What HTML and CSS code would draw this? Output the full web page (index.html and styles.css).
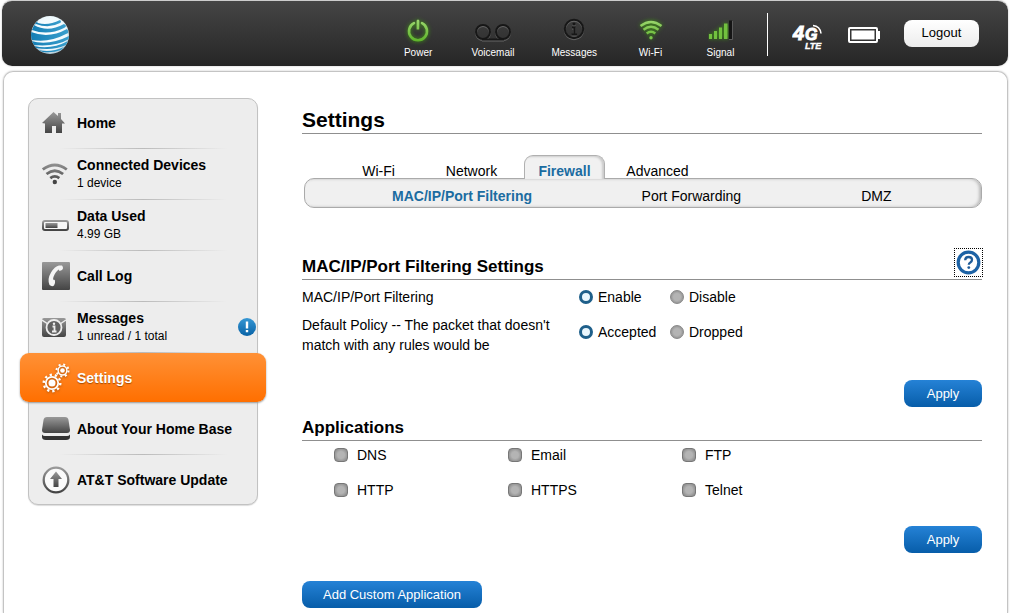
FILE: index.html
```html
<!DOCTYPE html>
<html lang="en">
<head>
<meta charset="utf-8">
<meta name="viewport" content="width=device-width, initial-scale=1">
<title>Settings</title>
<link rel="stylesheet" href="styles.css">
</head>
<body>
<svg class="defs" aria-hidden="true">
  <defs>
    <linearGradient id="steel" x1="0" y1="0" x2="0" y2="1"><stop offset="0" stop-color="#999"/><stop offset="1" stop-color="#444"/></linearGradient>
    <linearGradient id="steelWifi" gradientUnits="userSpaceOnUse" x1="0" y1="0" x2="0" y2="22"><stop offset="0" stop-color="#999"/><stop offset="1" stop-color="#3c3c3c"/></linearGradient>
    <linearGradient id="lime" gradientUnits="userSpaceOnUse" x1="0" y1="0" x2="0" y2="26"><stop offset="0" stop-color="#a4dc78"/><stop offset="1" stop-color="#59b025"/></linearGradient>
    <linearGradient id="band" x1="0" y1="0" x2="1" y2="0"><stop offset="0" stop-color="#147db4"/><stop offset="1" stop-color="#3a9fcd"/></linearGradient>
    <radialGradient id="orb" cx=".5" cy=".45" r=".55"><stop offset="0" stop-color="#fff"/><stop offset=".8" stop-color="#eef9fd"/><stop offset="1" stop-color="#a9c3d0"/></radialGradient>
    <linearGradient id="alert" x1="0" y1="0" x2="0" y2="1"><stop offset="0" stop-color="#3697d4"/><stop offset="1" stop-color="#0862a6"/></linearGradient>
    <clipPath id="orbClip"><circle cx="19" cy="19" r="19"/></clipPath>
  </defs>
</svg>

<header class="topbar">
  <a class="logo" href="#" aria-label="AT&amp;T">
    <svg width="38" height="38" viewBox="0 0 38 38">
      <circle cx="19" cy="19" r="19" fill="url(#orb)"/>
      <g clip-path="url(#orbClip)" fill="url(#band)">
        <path d="M8 3Q5 6 7 7Q17 10 29 4Q31 6 29 7Q18 13 5 8L3 9Z"/>
        <path d="M3 9Q17 17 33 8Q37 10 33 12Q17 20 1 14Z"/>
        <path d="M0 16Q18 23 36 13Q39 17 35 18Q18 27 1 24L-1 21Z"/>
        <path d="M0 25Q18 30 38 20L38 23Q25 31 3 29Z"/>
        <path d="M3 30Q20 34 37 25L35 29Q22 35 5 32Z"/>
        <path d="M7 34Q20 37 33 31L30 34Q22 37 12 36Z"/>
      </g>
    </svg>
  </a>
  <ul class="status">
    <li>
      <svg class="glow" width="26" height="26" viewBox="0 0 26 26" fill="none" stroke="url(#lime)" stroke-width="2.6" stroke-linecap="round"><path d="M9 6.2a9 9 0 1 0 8 0"/><path d="M12.9 4v8.5L13.1 4"/></svg>
      <span>Power</span>
    </li>
    <li>
      <svg class="etched" width="38" height="26" viewBox="0 0 38 26" fill="none" stroke="#171717" stroke-width="2"><circle cx="9" cy="15" r="7"/><circle cx="29" cy="15" r="7"/><path d="M8 22.500h22"/></svg>
      <span>Voicemail</span>
    </li>
    <li>
      <svg class="etched" width="26" height="26" viewBox="0 0 26 26" fill="none" stroke="#171717"><circle cx="13" cy="12" r="9.2" stroke-width="2"/><path d="M11 10.500h2.500v7M10.500 17.500h5.500" stroke-width="2"/><circle cx="13" cy="7" r="1.600" fill="#171717" stroke="none"/></svg>
      <span>Messages</span>
    </li>
    <li>
      <svg class="glow" width="26" height="26" viewBox="0 0 26 26" fill="none" stroke="url(#lime)" stroke-width="2.400"><path d="M2.500 9q10.500-8 21 0M5.500 12.700q7.500-6 15 0M8.700 16.500q4.300-3.600 8.600 0"/><circle cx="13" cy="20.800" r="1.700" fill="#7cc84b" stroke="none"/></svg>
      <span>Wi-Fi</span>
    </li>
    <li>
      <svg width="26" height="26" viewBox="0 0 26 26"><g class="glow" fill="#72c13f"><path d="M1 17h3v5H1zM6 14h3v8H6zM11 10.500h3V22h-3zM16 6.500h3.500V22H16z"/></g><path d="M21 3.500h3V22h-3z" fill="#151515"/><path d="M24.500 4v18.500H21" fill="none" stroke="#5b5b5b"/></svg>
      <span>Signal</span>
    </li>
  </ul>
  <div class="tools">
    <svg class="lte" width="34" height="28" viewBox="0 0 34 28" role="img" aria-label="4G LTE"><text fill="#fff" stroke="#fff" stroke-width="1"><tspan class="lte-four" x="1" y="17">4</tspan><tspan class="lte-g" x="13" y="17">G</tspan><tspan class="lte-sub" x="13" y="26" stroke-width=".4">LTE</tspan></text><path d="M21 2.500q7 .5 8 8" fill="none" stroke="#fff" stroke-width="1.600"/></svg>
    <svg width="32" height="16" viewBox="0 0 32 16" role="img" aria-label="Battery"><rect x="1" y="1" width="28" height="14" rx="1" fill="none" stroke="#fff" stroke-width="2"/><path d="M3.500 3.500h23v9h-23zM30 4h2v8h-2z" fill="#fff"/></svg>
    <button class="logout" type="button">Logout</button>
  </div>
</header>

<div class="panel">
  <nav class="sidebar" aria-label="Main">
    <ul>
      <li><a href="#">
        <svg width="28" height="24" viewBox="0 0 28 24"><path d="M0 12L11.500 1l4.500 4V2h3v6l4 4.500h-3V22h-6v-7h-4v7H3v-9.500z" fill="url(#steel)"/></svg>
        <span class="label">Home</span></a></li>
      <li><a href="#">
        <svg width="28" height="24" viewBox="0 0 28 24" fill="none" stroke="url(#steelWifi)" stroke-width="2.800"><path d="M.8 7.500q12-9 24 0M4.500 12q8.300-6.500 16.600 0M8.300 16.200q4.500-3.600 9 0"/><circle cx="12.800" cy="20" r="2.200" fill="#444" stroke="none"/></svg>
        <span class="label">Connected Devices<small>1 device</small></span></a></li>
      <li><a href="#">
        <svg width="28" height="24" viewBox="0 0 28 24"><rect x="1" y="8" width="25" height="9" rx="2" fill="#f6f6f6" stroke="url(#steel)" stroke-width="2"/><rect x="3.500" y="10" width="12" height="5" fill="url(#steel)"/></svg>
        <span class="label">Data Used<small>4.99 GB</small></span></a></li>
      <li><a href="#">
        <svg width="28" height="28" viewBox="0 0 28 28"><rect width="28" height="28" rx="1" fill="url(#steel)"/><path d="M20 3.500q2 2.500 0 4.500l-2.500 1q-.5-1.500-1-1.500Q11.500 12 11 17.500q1.500 0 2 1 .5 3-1 5-2 1.500-4.500-.5Q5 17 9 10.500T17 3.500z" fill="#f4f4f4"/></svg>
        <span class="label">Call Log</span></a></li>
      <li><a href="#">
        <svg width="28" height="24" viewBox="0 0 28 24"><rect y="3" width="24" height="19" rx="2" fill="url(#steel)"/><path d="M0 5l6 4M24 5l-6 4" stroke="#eee" stroke-width="1.500"/><circle cx="12" cy="12.500" r="7.500" fill="#626262" stroke="#eee" stroke-width="1.800"/><path d="M10.500 11.500h2v5M10 16.500h4.500" fill="none" stroke="#eee" stroke-width="1.800"/><circle cx="12" cy="8.700" r="1.200" fill="#eee"/></svg>
        <span class="label">Messages<small>1 unread / 1 total</small></span>
        <svg class="alert" width="18" height="18" viewBox="0 0 18 18" role="img" aria-label="Unread"><circle cx="9" cy="9" r="9" fill="url(#alert)"/><path d="M7.800 3.500h2.400v7H7.800zM7.800 12h2.400v2.300H7.800z" fill="#fff"/></svg></a></li>
      <li class="current"><a href="#" aria-current="page">
        <svg width="28" height="30" viewBox="0 0 28 30" fill="none" stroke="#fff"><circle cx="10" cy="20" r="6.200" stroke-width="1.800"/><circle cx="10" cy="20" r="8.300" stroke-width="2.400" stroke-dasharray="2.300 2.910"/><circle cx="10" cy="20" r="3.500" fill="#fff" stroke="none"/><circle cx="20.500" cy="7.500" r="4.400" stroke-width="1.500"/><circle cx="20.500" cy="7.500" r="6" stroke-width="2" stroke-dasharray="2 2.710"/><circle cx="20.500" cy="7.500" r="2.300" fill="#fff" stroke="none"/></svg>
        <span class="label">Settings</span></a></li>
      <li><a href="#">
        <svg width="28" height="24" viewBox="0 0 28 24"><path d="M5 0h18q3 0 3.500 3L28 13q0 3-3 3H3q-3 0-3-3L1.500 3Q2 0 5 0z" fill="url(#steel)"/><path d="M0 17.500q1 1.500 3 1.500h22q2 0 3-1.500V20q0 3-4 3H4q-4 0-4-3z" fill="#333"/></svg>
        <span class="label">About Your Home Base</span></a></li>
      <li><a href="#">
        <svg width="28" height="28" viewBox="0 0 28 28"><circle cx="14" cy="14" r="12.300" fill="#fafafa" stroke="url(#steel)" stroke-width="2.300"/><path d="M14 5.500l6 7.500h-3.500v8h-5v-8H8z" fill="url(#steel)"/></svg>
        <span class="label">AT&amp;T Software Update</span></a></li>
    </ul>
  </nav>

  <main class="content">
    <h1>Settings</h1>
    <nav class="tabs" aria-label="Settings">
      <ul>
        <li><a href="#">Wi-Fi</a></li>
        <li><a href="#">Network</a></li>
        <li><a class="selected" href="#" aria-current="true">Firewall</a></li>
        <li><a href="#">Advanced</a></li>
      </ul>
    </nav>
    <nav class="subtabs" aria-label="Firewall">
      <a class="selected" href="#" aria-current="page">MAC/IP/Port Filtering</a>
      <a href="#">Port Forwarding</a>
      <a href="#">DMZ</a>
    </nav>

    <form class="filtering">
      <div class="section-head">
        <h2>MAC/IP/Port Filtering Settings</h2>
        <button class="help" type="button" aria-label="Help">
          <svg width="25" height="25" viewBox="0 0 25 25"><circle cx="12.500" cy="12.500" r="10.300" fill="#fff" stroke="#1c62a5" stroke-width="3.200"/><path d="M9.200 10.300q0-3.300 3.500-3.300 3.300 0 3.300 2.700 0 1.700-1.700 2.700-1.500.8-1.500 2.300" fill="none" stroke="#1f5c99" stroke-width="2.300"/><circle cx="12.800" cy="17.600" r="1.400" fill="#1f5c99"/></svg>
        </button>
      </div>
      <div class="row" role="radiogroup" aria-labelledby="filtering-label">
        <span id="filtering-label">MAC/IP/Port Filtering</span>
        <label class="option"><input type="radio" name="filtering" checked>Enable</label>
        <label class="option"><input type="radio" name="filtering">Disable</label>
      </div>
      <div class="row row-tall" role="radiogroup" aria-labelledby="policy-label">
        <span id="policy-label">Default Policy -- The packet that doesn't match with any rules would be</span>
        <label class="option"><input type="radio" name="policy" checked>Accepted</label>
        <label class="option"><input type="radio" name="policy">Dropped</label>
      </div>
      <div class="actions"><button class="primary" type="button">Apply</button></div>
    </form>

    <form class="applications">
      <div class="section-head"><h2>Applications</h2></div>
      <div class="checks">
        <label><input type="checkbox">DNS</label>
        <label><input type="checkbox">Email</label>
        <label><input type="checkbox">FTP</label>
        <label><input type="checkbox">HTTP</label>
        <label><input type="checkbox">HTTPS</label>
        <label><input type="checkbox">Telnet</label>
      </div>
      <div class="actions"><button class="primary" type="button">Apply</button></div>
    </form>
    <button class="primary add" type="button">Add Custom Application</button>
  </main>
</div>
</body>
</html>
```
FILE: styles.css
```css
* { box-sizing: border-box; }

body {
  display: flex;
  flex-direction: column;
  min-height: 100vh;
  margin: 0;
  background: #fff;
  color: #000;
  font: 14px/20px "Liberation Sans", Arial, sans-serif;
}

ul { list-style: none; margin: 0; padding: 0; }
h1, h2 { margin: 0; }
a { color: inherit; text-decoration: none; }
button { font: 13px/20px "Liberation Sans", Arial, sans-serif; cursor: pointer; }
svg { display: block; flex: none; }
.defs { position: absolute; width: 0; height: 0; }

/* Top bar */
.topbar {
  display: flex;
  align-items: center;
  height: 66px;
  margin: 0 2px;
  padding: 2px 29px 0 29px;
  border-top: 1px solid #ccc;
  border-radius: 10px;
  background: linear-gradient(#454545, #262626);
  box-shadow: 0 0 2px #bbb;
}
.logo { display: block; }
.status {
  display: flex;
  gap: 37px;
  margin-left: auto;
  padding-top: 6px;
}
.status li {
  display: flex;
  flex-direction: column;
  align-items: center;
  gap: 4px;
  min-width: 33px;
  color: #fff;
  font-size: 10px;
  line-height: 12px;
}
.glow { filter: drop-shadow(0 0 2px #3f9a10); }
.etched { filter: drop-shadow(0 1px 0 #666); }
.tools {
  display: flex;
  align-items: center;
  gap: 22px;
  height: 43px;
  margin-left: 30px;
  padding-left: 24px;
  border-left: 1px solid #fff;
}
.lte { margin-top: 4px; }
.lte text { font: italic bold 20px "Liberation Sans", Arial, sans-serif; }
.lte .lte-g { font-size: 16px; }
.lte .lte-sub { font-size: 9px; }
.logout {
  width: 75px;
  height: 27px;
  margin: 0 0 3px 2px;
  padding: 0;
  border: 0;
  border-radius: 8px;
  background: linear-gradient(#fff, #ececec);
  color: #000;
}

/* Page panel */
.panel {
  display: flex;
  flex: 1;
  align-items: flex-start;
  gap: 44px;
  margin: 5px 2px 0 3px;
  padding: 26px 25px 5px 24px;
  border: 1px solid #c4c4c4;
  border-bottom: 0;
  border-radius: 10px 10px 0 0;
  box-shadow: 0 0 2px #bbb;
}

/* Side navigation */
.sidebar {
  flex: 0 0 230px;
  border: 1px solid #c2c2c2;
  border-radius: 10px;
  background: #ededed;
  box-shadow: 0 1px 1px #ddd;
}
.sidebar li { position: relative; }
.sidebar li:not(:last-child)::after {
  content: "";
  position: absolute;
  right: 30px;
  bottom: 0;
  left: 30px;
  height: 1px;
  background: linear-gradient(90deg, transparent, #bbb 50%, transparent);
}
.sidebar a {
  display: flex;
  align-items: center;
  gap: 7px;
  height: 51px;
  padding: 0 13px 2px;
}
.sidebar li:first-child a { height: 50px; }
.sidebar li:last-child a { height: 49px; padding-bottom: 0; }
.sidebar .label { flex: 1; font-weight: bold; line-height: 18px; }
.sidebar small { display: block; font-size: 12px; font-weight: normal; line-height: 18px; }
.sidebar .alert { margin-right: -12px; }
.sidebar .current {
  margin: 0 -9px 2px;
  padding: 0 9px;
  border-radius: 9px;
  background: linear-gradient(#ff9136, #ff6f00);
  box-shadow: 0 1px 2px #999;
  color: #fff;
  text-shadow: 0 1px 1px #a64b00;
}
.sidebar .current a { height: 49px; padding-bottom: 0; }
.sidebar .current::after { display: none; }
.sidebar .current svg { filter: drop-shadow(0 1px 1px #b55a10); }

/* Content */
.content { flex: 1; min-width: 0; padding-top: 10px; }
h1 {
  padding-bottom: 1px;
  border-bottom: 1px solid #8f8f8f;
  font-size: 21px;
  line-height: 24px;
}
.tabs ul {
  display: flex;
  margin-top: 21px;
  padding-left: 30px;
}
.tabs li {
  display: flex;
  justify-content: center;
  width: 93px;
}
.tabs a {
  height: 23px;
  padding: 6px 13px 0;
  border: 1px solid transparent;
  border-bottom: 0;
  line-height: 18px;
}
.tabs .selected {
  position: relative;
  z-index: 1;
  margin-bottom: -1px;
  height: 24px;
  border-color: #b0b0b0;
  border-radius: 9px 9px 0 0;
  background: #f1f1f1;
  box-shadow: inset -2px 1px 2px #ccc;
}
.selected { color: #1b6ca1; font-weight: bold; }
.subtabs {
  display: grid;
  grid-template-columns: 25fr 22fr 12fr;
  height: 30px;
  margin-left: 2px;
  padding: 7px 0 0 87px;
  border: 1px solid #aaa;
  border-radius: 10px;
  background: #f0f0f0;
  box-shadow: inset -2px 0 3px #bbb;
}
.filtering { margin-top: 40px; }
.section-head {
  display: flex;
  align-items: flex-end;
  justify-content: space-between;
  padding-bottom: 2px;
  border-bottom: 1px solid #8f8f8f;
}
h2 { font-size: 17px; line-height: 20px; }
.help {
  display: grid;
  place-items: center;
  width: 29px;
  height: 29px;
  margin-right: -1px;
  padding: 0;
  border: 1px dotted #000;
  background: none;
}
.row {
  display: grid;
  grid-template-columns: 277px 91px 1fr;
  align-items: start;
  margin-top: 7px;
}
.row > span { padding-right: 20px; }
.option { display: flex; align-items: center; gap: 5px; }
.row-tall { margin-top: 8px; }
.row-tall .option { padding-top: 7px; }

input {
  flex: none;
  width: 14px;
  height: 14px;
  margin: 0;
  appearance: none;
  background: radial-gradient(#b4b4b4 40%, #959595 75%);
}
input[type="radio"] { border: 1px solid #888; border-radius: 50%; }
input[type="radio"]:checked {
  border: 3px solid #1e5f8a;
  background: #e9f6fd;
}
input[type="checkbox"] { border: 1px solid #777; border-radius: 4px; }
input[type="checkbox"]:checked { background: #1e628f; }

.actions { display: flex; justify-content: flex-end; margin-top: 25px; }
.primary {
  width: 78px;
  height: 27px;
  padding: 0;
  border: 0;
  border-radius: 8px;
  background: linear-gradient(#2582d6, #075da9);
  color: #fff;
}
.applications { margin-top: 11px; }
.applications .actions { margin-top: 26px; }
.checks {
  display: grid;
  grid-template-columns: repeat(3, 174px);
  row-gap: 15px;
  margin-top: 4px;
  padding-left: 32px;
}
.checks label { display: flex; align-items: center; gap: 9px; }
.add { width: 180px; margin-top: 28px; }
```
